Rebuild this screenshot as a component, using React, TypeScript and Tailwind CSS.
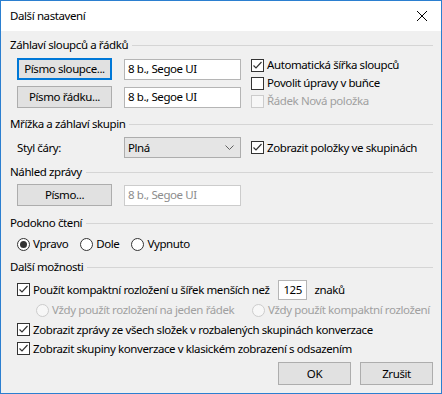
import React from "react";

function Check({ checked = false, disabled = false }: { checked?: boolean; disabled?: boolean }) {
  return (
    <span
      className={`w-[13px] h-[13px] shrink-0 border flex items-center justify-center ${
        disabled ? "border-[#cccccc] bg-[#f7f7f7]" : "border-[#333333] bg-white"
      }`}
    >
      {checked && (
        <svg width="11" height="11" viewBox="0 0 11 11">
          <path d="M1.5 5.5 L4 8 L9.5 2" fill="none" stroke="#333333" strokeWidth="1.2" />
        </svg>
      )}
    </span>
  );
}

function Radio({ selected = false, disabled = false }: { selected?: boolean; disabled?: boolean }) {
  return (
    <span
      className={`w-[13px] h-[13px] shrink-0 rounded-full border flex items-center justify-center ${
        disabled ? "border-[#cccccc] bg-[#f7f7f7]" : "border-[#333333] bg-white"
      }`}
    >
      {selected && <span className="w-[7px] h-[7px] rounded-full bg-[#333333]" />}
    </span>
  );
}

function Header({ title, className = "" }: { title: string; className?: string }) {
  return (
    <div className={`flex items-center h-[16px] ${className}`}>
      <span className="whitespace-nowrap">{title}</span>
      <span className="flex-1 ml-[4px] border-t border-[#d5d5d5]" />
    </div>
  );
}

function Btn({ label, focused = false, className = "" }: { label: string; focused?: boolean; className?: string }) {
  return (
    <div
      className={`flex items-center justify-center whitespace-nowrap bg-[#e1e1e1] ${
        focused ? "border-2 border-[#0078d7]" : "border border-[#adadad]"
      } ${className}`}
    >
      {label}
    </div>
  );
}

function TextBox({ value, disabled = false }: { value: string; disabled?: boolean }) {
  return (
    <div
      className={`w-[117px] h-[21px] flex items-center px-[3px] border whitespace-nowrap ${
        disabled ? "border-[#cccccc] bg-white text-[#8d8d8d]" : "border-[#b5b5b5] bg-white"
      }`}
    >
      {value}
    </div>
  );
}

function CheckRow({ label, checked = false, disabled = false, className = "" }: { label: string; checked?: boolean; disabled?: boolean; className?: string }) {
  return (
    <div className={`flex items-center gap-[3px] h-[18px] whitespace-nowrap ${disabled ? "text-[#a0a0a0]" : ""} ${className}`}>
      <Check checked={checked} disabled={disabled} />
      <span>{label}</span>
    </div>
  );
}

export default function App() {
  return (
    <div
      className="w-[442px] h-[394px] flex flex-col border border-[#2b7fd0] bg-[#f0f0f0] text-[11.5px] tracking-[-0.4px] text-black leading-[16px]"
      style={{ fontFamily: '"Segoe UI", "Noto Sans", sans-serif' }}
    >
      {/* Title bar */}
      <div className="h-[30px] bg-white flex items-center justify-between pl-[9px] pr-[13px] shrink-0">
        <span>Další nastavení</span>
        <svg width="12" height="12" viewBox="0 0 12 12">
          <path d="M1 1 L11 11 M11 1 L1 11" stroke="#000" strokeWidth="1" />
        </svg>
      </div>

      <div className="flex-1 flex flex-col pl-[9px] pr-[8px]">
        {/* Záhlaví sloupců a řádků */}
        <Header title="Záhlaví sloupců a řádků" className="mt-[6px]" />
        <div className="flex pl-[7px] mt-[5px]">
          <div className="flex flex-col gap-[6px]">
            <div className="flex items-center gap-[12px]">
              <Btn label="Písmo sloupce..." focused className="w-[95px] h-[22px]" />
              <TextBox value="8 b., Segoe UI" />
            </div>
            <div className="flex items-center gap-[12px]">
              <Btn label="Písmo řádku..." className="w-[95px] h-[22px]" />
              <TextBox value="8 b., Segoe UI" />
            </div>
          </div>
          <div className="flex flex-col ml-[10px] -mt-[2px]">
            <CheckRow label="Automatická šířka sloupců" checked />
            <CheckRow label="Povolit úpravy v buňce" />
            <CheckRow label="Řádek Nová položka" disabled />
          </div>
        </div>

        {/* Mřížka a záhlaví skupin */}
        <Header title="Mřížka a záhlaví skupin" className="mt-[6px]" />
        <div className="flex items-center pl-[7px] mt-[5px] h-[21px]">
          <span className="w-[107px]">Styl čáry:</span>
          <div className="w-[117px] h-[21px] flex items-center justify-between pl-[3px] pr-[6px] bg-[#e5e5e5] border border-[#adadad]">
            <span>Plná</span>
            <svg width="9" height="6" viewBox="0 0 9 6">
              <path d="M0.5 0.5 L4.5 4.5 L8.5 0.5" fill="none" stroke="#606060" strokeWidth="1" />
            </svg>
          </div>
          <CheckRow label="Zobrazit položky ve skupinách" checked className="ml-[10px]" />
        </div>

        {/* Náhled zprávy */}
        <Header title="Náhled zprávy" className="mt-[6px]" />
        <div className="flex items-center gap-[12px] pl-[7px] mt-[4px]">
          <Btn label="Písmo..." className="w-[95px] h-[22px]" />
          <TextBox value="8 b., Segoe UI" disabled />
        </div>

        {/* Podokno čtení */}
        <Header title="Podokno čtení" className="mt-[9px]" />
        <div className="flex items-center pl-[7px] mt-[4px] h-[18px]">
          <div className="flex items-center gap-[3px]">
            <Radio selected />
            <span>Vpravo</span>
          </div>
          <div className="flex items-center gap-[3px] ml-[12px]">
            <Radio />
            <span>Dole</span>
          </div>
          <div className="flex items-center gap-[3px] ml-[12px]">
            <Radio />
            <span>Vypnuto</span>
          </div>
        </div>

        {/* Další možnosti */}
        <Header title="Další možnosti" className="mt-[6px]" />
        <div className="flex items-center pl-[7px] mt-[4px] h-[21px] whitespace-nowrap">
          <Check checked />
          <span className="ml-[3px]">Použít kompaktní rozložení u šířek menších než</span>
          <div className="w-[29px] h-[20px] ml-[9px] flex items-center px-[4px] bg-white border border-[#b5b5b5]">125</div>
          <span className="ml-[7px]">znaků</span>
        </div>
        <div className="flex items-center pl-[26px] h-[20px] text-[#a0a0a0] whitespace-nowrap">
          <Radio disabled />
          <span className="ml-[3px] w-[200px]">Vždy použít rozložení na jeden řádek</span>
          <Radio disabled />
          <span className="ml-[3px]">Vždy použít kompaktní rozložení</span>
        </div>
        <CheckRow label="Zobrazit zprávy ze všech složek v rozbalených skupinách konverzace" checked className="pl-[7px] h-[19px]" />
        <CheckRow label="Zobrazit skupiny konverzace v klasickém zobrazení s odsazením" checked className="pl-[7px] h-[19px]" />

        <div className="flex justify-end gap-[9px] mt-[4px]">
          <Btn label="OK" className="w-[73px] h-[23px]" />
          <Btn label="Zrušit" className="w-[73px] h-[23px]" />
        </div>
      </div>
    </div>
  );
}
